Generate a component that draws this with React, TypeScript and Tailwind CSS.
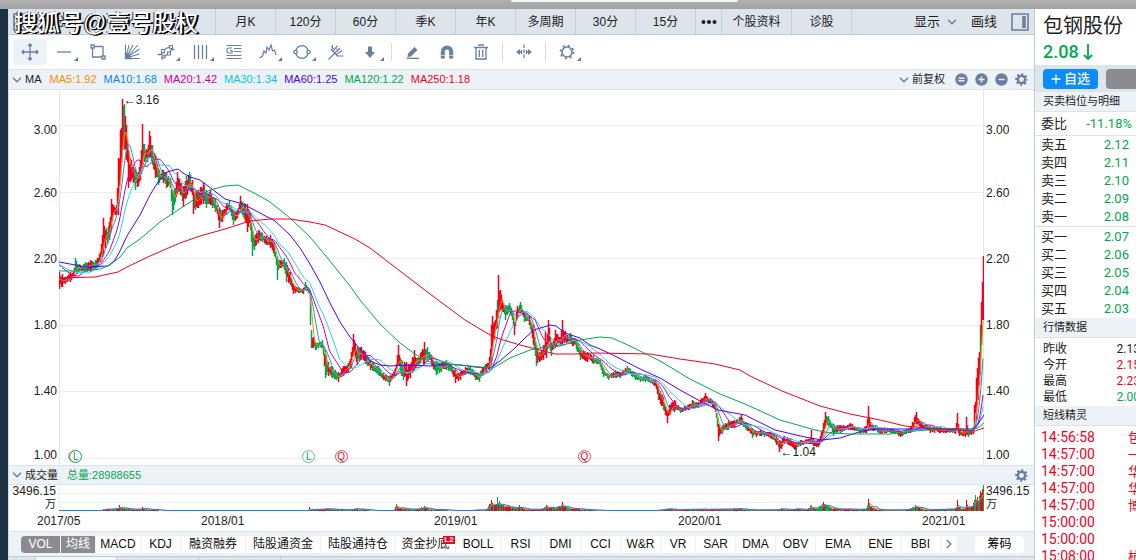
import type { ReactNode } from 'react';

type Point = [number, number];
type Range = [number, number, number];

const RED = '#f5001d';
const GREEN = '#00a94f';

// x, high, low
const ranges: Range[] = [
  [59, 272, 289], [62, 274, 287], [65, 277, 284], [70, 272, 282], [74, 268, 277], [75, 258, 272], [77, 264, 274],
  [85, 262, 272], [90, 260, 272], [95, 260, 270], [100, 252, 262], [102, 235, 257], [103, 218, 255], [105, 230, 248],
  [109, 222, 240], [111, 199, 230], [113, 205, 215], [116, 205, 215], [118, 158, 215], [120, 130, 180], [122, 99, 150],
  [124, 104, 150], [126, 125, 160], [128, 150, 188], [131, 160, 180], [135, 168, 190], [138, 172, 186], [140, 160, 180],
  [142, 124, 168], [144, 144, 162], [147, 150, 162], [149, 131, 157], [152, 145, 165], [155, 155, 178], [158, 168, 185],
  [163, 170, 183], [166, 172, 188], [170, 178, 188], [172, 190, 215], [175, 188, 202], [177, 172, 194], [181, 183, 196],
  [183, 186, 207], [186, 176, 198], [189, 172, 190], [192, 180, 195], [193, 190, 214], [198, 190, 208], [203, 182, 204],
  [206, 190, 208], [210, 190, 205], [215, 198, 212], [219, 208, 228], [222, 210, 222], [226, 203, 215], [229, 200, 210],
  [233, 210, 225], [237, 210, 218], [240, 196, 212], [245, 204, 222], [247, 204, 232], [250, 212, 230], [252, 230, 256],
  [254, 235, 250], [258, 230, 243], [262, 233, 242], [266, 236, 245], [270, 235, 248], [274, 242, 256], [277, 256, 280],
  [280, 260, 268], [284, 258, 270], [286, 262, 282], [290, 272, 285], [293, 284, 294], [298, 287, 293], [303, 288, 294],
  [305, 282, 290], [309, 290, 294], [310, 295, 325], [311, 330, 348], [315, 342, 350], [322, 340, 348], [325, 350, 378],
  [328, 362, 376], [332, 367, 378], [338, 372, 382], [343, 366, 376], [348, 363, 372], [351, 352, 368], [353, 334, 356],
  [357, 347, 365], [361, 347, 358], [365, 352, 364], [370, 360, 370], [378, 366, 375], [383, 373, 380], [389, 376, 386],
  [395, 368, 376], [398, 345, 365], [401, 360, 376], [406, 362, 386], [410, 364, 378], [414, 350, 370], [418, 357, 366],
  [424, 342, 365], [427, 347, 360], [431, 355, 365], [436, 362, 375], [441, 362, 372], [446, 360, 370], [451, 364, 372],
  [455, 370, 383], [460, 372, 380], [465, 367, 374], [470, 366, 375], [475, 372, 380], [479, 373, 382], [482, 367, 376],
  [489, 357, 370], [491, 325, 365], [492, 316, 350], [494, 322, 340], [497, 300, 328], [498, 275, 318], [500, 290, 310],
  [502, 300, 312], [505, 305, 320], [509, 303, 312], [513, 313, 326], [514, 322, 335], [517, 306, 318], [520, 302, 312],
  [524, 312, 322], [529, 316, 325], [533, 325, 345], [536, 345, 366], [539, 352, 362], [543, 345, 360], [545, 332, 355],
  [546, 342, 358], [548, 320, 345], [551, 342, 356], [555, 330, 347], [560, 337, 346], [562, 320, 345], [566, 335, 343],
  [570, 333, 344], [576, 339, 350], [580, 348, 360], [587, 352, 362], [593, 355, 364], [600, 360, 367], [603, 368, 377],
  [608, 374, 380], [615, 370, 378], [620, 372, 378], [627, 366, 373], [635, 373, 380], [640, 376, 382], [645, 375, 382],
  [655, 380, 386], [658, 386, 400], [663, 397, 410], [667, 410, 423], [669, 405, 415], [674, 400, 412], [680, 407, 413],
  [688, 405, 410], [692, 400, 409], [698, 402, 408], [705, 393, 402], [710, 398, 404], [715, 404, 412], [718, 424, 441],
  [722, 425, 434], [728, 420, 430], [734, 420, 428], [741, 415, 425], [746, 423, 430], [752, 428, 438], [760, 430, 436],
  [770, 432, 438], [776, 436, 445], [779, 440, 452], [784, 436, 444], [790, 438, 446], [795, 442, 450], [800, 440, 446],
  [810, 438, 444], [811, 430, 444], [813, 439, 446], [818, 440, 447], [821, 432, 442], [825, 412, 428], [828, 416, 426],
  [833, 424, 436], [840, 425, 433], [850, 423, 430], [860, 428, 434], [866, 426, 433], [868, 406, 430], [870, 422, 430],
  [880, 429, 434], [890, 428, 433], [900, 430, 437], [910, 427, 433], [916, 412, 424], [920, 421, 428], [930, 426, 433],
  [940, 427, 433], [955, 428, 434], [957, 413, 430], [959, 430, 436], [965, 430, 437], [966, 417, 435], [968, 430, 437],
  [973, 428, 434], [974, 405, 428], [976, 378, 420], [978, 358, 400], [980, 325, 375], [981, 302, 345], [983, 256, 320],
];

const ma60: Point[] = [
  [59, 262], [70, 264], [85, 267], [108, 266], [115, 260], [120, 251], [127, 236], [140, 215], [150, 195], [158, 182],
  [167, 172], [174, 170], [178, 169], [183, 173], [190, 177], [200, 180], [212, 189], [225, 199], [243, 204], [260, 213],
  [275, 221], [290, 235], [300, 248], [310, 264], [320, 282], [330, 303], [340, 322], [350, 337], [360, 349], [370, 361],
  [380, 365], [390, 366], [410, 365], [430, 366], [445, 364], [460, 365], [475, 367], [490, 368], [500, 361], [515, 348],
  [525, 338], [534, 330], [550, 325], [556, 326], [565, 333], [580, 338], [590, 345], [600, 349], [615, 356], [640, 369],
  [660, 378], [680, 390], [700, 401], [718, 410], [745, 415], [775, 430], [805, 437], [822, 440], [840, 438], [862, 431],
  [880, 429], [930, 429], [972, 429], [978, 424], [984, 415],
];
const ma120: Point[] = [
  [59, 271], [85, 271], [100, 269], [110, 265], [120, 257], [127, 248], [140, 239], [160, 222], [190, 202], [210, 190],
  [225, 186], [238, 185], [258, 195], [270, 202], [290, 218], [310, 237], [330, 261], [350, 286], [360, 300], [380, 324],
  [400, 343], [415, 354], [430, 362], [445, 364], [460, 365], [480, 367], [493, 368], [500, 364], [510, 358], [530, 350],
  [545, 347], [560, 346], [580, 340], [600, 337], [612, 338], [630, 346], [660, 361], [690, 379], [720, 394], [745, 404],
  [780, 420], [815, 430], [830, 433], [850, 434], [890, 434], [915, 431], [940, 429], [970, 430], [978, 428], [984, 423],
];
const ma250: Point[] = [
  [59, 278], [95, 277], [118, 272], [127, 267], [150, 256], [180, 243], [200, 236], [225, 229], [250, 221], [270, 219],
  [290, 219], [310, 222], [325, 225], [340, 232], [355, 239], [370, 248], [400, 271], [430, 294], [465, 320], [490, 335],
  [500, 339], [520, 345], [540, 350], [555, 354], [575, 354], [595, 353], [650, 354], [680, 359], [715, 364], [740, 370],
  [750, 376], [782, 391], [820, 406], [850, 414], [880, 420], [905, 426], [940, 429], [975, 431], [984, 428],
];

// x, bar height
const volumes: Point[] = [
  [59, 0], [101, 0], [103, 2], [117, 3], [119, 6], [122, 4], [130, 2], [138, 2], [142, 4], [146, 2], [158, 1], [160, 0],
  [308, 0], [309, 4], [311, 1], [326, 3], [342, 1], [348, 1], [355, 3], [368, 1], [372, 0], [393, 0], [396, 7], [400, 3],
  [415, 2], [424, 5], [428, 2], [445, 1], [452, 0], [470, 0], [476, 1], [485, 1], [491, 11], [494, 6], [497, 14],
  [501, 7], [508, 6], [515, 3], [519, 6], [524, 2], [540, 2], [546, 6], [552, 4], [556, 4], [562, 9], [566, 4], [575, 3],
  [590, 1], [605, 0], [655, 0], [668, 3], [675, 1], [690, 2], [720, 2], [738, 3], [750, 1], [775, 1], [781, 3], [790, 1],
  [796, 3], [805, 1], [811, 6], [815, 2], [823, 9], [828, 5], [835, 3], [850, 2], [866, 2], [868, 12], [871, 4], [880, 1],
  [905, 1], [915, 6], [920, 3], [928, 1], [945, 2], [955, 3], [957, 11], [960, 3], [965, 3], [966, 11], [969, 4],
  [973, 8], [975, 16], [977, 14], [980, 20], [983, 26],
];

function at(points: number[][], x: number, k: number) {
  for (let i = 1; i < points.length; i++) {
    const a = points[i - 1];
    const b = points[i];
    if (x <= b[0]) return a[k] + ((b[k] - a[k]) * (x - a[0])) / (b[0] - a[0]);
  }
  return points[points.length - 1][k];
}

function makeRandom(seed: number) {
  let s = seed;
  return () => {
    s = (s * 16807) % 2147483647;
    return s / 2147483647;
  };
}

const line = (points: number[][]) => 'M' + points.map((p) => `${p[0]} ${p[1].toFixed(1)}`).join('L');

function buildCandles() {
  const rand = makeRandom(4711);
  const closes: number[] = [];
  let up = '';
  let down = '';
  let run = 0;
  let rising = true;
  for (let x = 59; x < 984; x++) {
    const high = at(ranges, x, 1);
    const low = at(ranges, x, 2);
    const size = low - high;
    const peak = ranges.some((r) => r[0] === x);
    if (run <= 0) {
      const slope = at(ranges, x + 2, 1) - at(ranges, x - 2, 1);
      rising = rand() < (slope < -2 ? 0.85 : slope > 2 ? 0.35 : 0.58);
      run = 1 + Math.floor(rand() * 3);
    }
    run--;
    const top = peak ? high : high + size * rand() * 0.35;
    const bottom = peak ? low : low - size * rand() * 0.35;
    const bar = `M${x + 0.5} ${Math.round(top)}V${Math.round(bottom)}`;
    if (rising) up += bar;
    else down += bar;
    closes.push((high + low) / 2 + (rand() - 0.5) * size * 0.3);
  }
  return { up, down, closes };
}

function average(values: number[], days: number, before: number) {
  const out: Point[] = [];
  values.forEach((_, i) => {
    let sum = 0;
    for (let j = i - days + 1; j <= i; j++) sum += j < 0 ? before : values[j];
    out.push([59 + i, sum / days]);
  });
  return line(out);
}

function buildVolume() {
  const rand = makeRandom(99);
  const heights: number[] = [];
  let up = '';
  let down = '';
  for (let x = 59; x < 984; x++) {
    const h = at(volumes, x, 1) * (volumes.some((v) => v[0] === x) ? 1 : 0.55 + rand() * 0.4);
    heights.push(510.5 - h * 0.8);
    if (h < 0.4) continue;
    const bar = `M${x + 0.5} 511V${Math.round(511 - h)}`;
    if (rand() < 0.6) up += bar;
    else down += bar;
  }
  return { up, down, heights };
}

const candles = buildCandles();
const volume = buildVolume();

const periods = ['分时', '日K', '周K', '月K', '120分', '60分', '季K', '年K', '多周期', '30分', '15分'];

const averages = [
  { label: 'MA5:1.92', color: 'text-[#ff8c00]' },
  { label: 'MA10:1.68', color: 'text-[#0a84ff]' },
  { label: 'MA20:1.42', color: 'text-[#c800a1]' },
  { label: 'MA30:1.34', color: 'text-[#00c8e6]' },
  { label: 'MA60:1.25', color: 'text-[#4b00ff]' },
  { label: 'MA120:1.22', color: 'text-[#00a94f]' },
  { label: 'MA250:1.18', color: 'text-[#f5001d]' },
];

const indicators = [
  { label: 'VOL', width: 'w-[39px]', active: true },
  { label: '均线', width: 'w-[34px]', active: true },
  { label: 'MACD', width: 'w-[44px]' },
  { label: 'KDJ', width: 'w-[39px]' },
  { label: '融资融券', width: 'w-[64px]' },
  { label: '陆股通资金', width: 'w-[74px]' },
  { label: '陆股通持仓', width: 'w-[74px]' },
  { label: '资金抄底', width: 'w-[59px]', badge: 'L2' },
  { label: 'BOLL', width: 'w-[44px]' },
  { label: 'RSI', width: 'w-[39px]' },
  { label: 'DMI', width: 'w-[39px]' },
  { label: 'CCI', width: 'w-[39px]' },
  { label: 'W&R', width: 'w-[39px]' },
  { label: 'VR', width: 'w-[34px]' },
  { label: 'SAR', width: 'w-[39px]' },
  { label: 'DMA', width: 'w-[39px]' },
  { label: 'OBV', width: 'w-[39px]' },
  { label: 'EMA', width: 'w-[44px]' },
  { label: 'ENE', width: 'w-[39px]' },
  { label: 'BBI', width: 'w-[39px]' },
];

const asks = [['卖五', '2.12'], ['卖四', '2.11'], ['卖三', '2.10'], ['卖二', '2.09'], ['卖一', '2.08']];
const bids = [['买一', '2.07'], ['买二', '2.06'], ['买三', '2.05'], ['买四', '2.04'], ['买五', '2.03']];

const quotes = [
  { label: '昨收', value: '2.13', color: 'text-[#222]' },
  { label: '今开', value: '2.15', color: 'text-[#f5001d]' },
  { label: '最高', value: '2.23', color: 'text-[#f5001d]' },
  { label: '最低', value: '2.00', color: 'text-[#00a94f]' },
];

const alerts = [
  ['14:56:58', '包'], ['14:57:00', '一'], ['14:57:00', '华'], ['14:57:00', '华'],
  ['14:57:00', '博'], ['15:00:00', ''], ['15:00:00', ''], ['15:08:00', '杭'],
];

function Chevron({ className = '' }: { className?: string }) {
  return (
    <svg viewBox="0 0 10 6" className={`h-[6px] w-[10px] shrink-0 ${className}`} fill="none" stroke="#6b7f9e" strokeWidth="1.4">
      <path d="M1 .8l4 4 4-4" />
    </svg>
  );
}

function Gear({ className = '' }: { className?: string }) {
  return (
    <svg viewBox="0 0 14 14" className={`h-[13px] w-[13px] shrink-0 ${className}`} fill="none" stroke="#6b7f9e">
      <circle cx="7" cy="7" r="3.9" strokeWidth="2.6" />
      <circle cx="7" cy="7" r="5.8" strokeWidth="2" strokeDasharray="2.28 2.28" strokeDashoffset="1.1" />
    </svg>
  );
}

function Tool({ label, active, menu, children }: { label: string; active?: boolean; menu?: boolean; children: ReactNode }) {
  return (
    <button
      aria-label={label}
      className={`relative flex h-[26px] w-[34px] shrink-0 items-center justify-center rounded-sm ${active ? 'bg-[#edf2f6]' : ''}`}
    >
      <svg viewBox="0 0 18 18" className="h-[18px] w-[18px]" fill="none" stroke="#6b7f9e" strokeWidth="1.3">
        {children}
      </svg>
      {menu && (
        <svg viewBox="0 0 4 4" className="absolute right-[3px] bottom-[4px] h-[4px] w-[4px]" fill="#5f7394">
          <path d="M4 0v4H0z" />
        </svg>
      )}
    </button>
  );
}

function Divider() {
  return <span className="mx-[4px] h-[18px] w-px shrink-0 bg-[#d9dce0]" />;
}

function PeriodBar() {
  return (
    <nav className="flex h-[26px] items-stretch border-b border-[#bfccd6] bg-[#dde4ea] text-[12px] text-[#222]">
      <button aria-label="布局" className="flex w-[27px] shrink-0 items-center justify-center border-r border-[#c3cfd9]">
        <svg viewBox="0 0 18 18" className="h-[18px] w-[18px]" fill="none" stroke="#6b7f9e" strokeWidth="1.6">
          <path d="M1 1h16v16H1zM5 4v10" />
        </svg>
      </button>
      {periods.map((p) => (
        <button key={p} className="w-[60px] shrink-0 border-r border-[#c3cfd9]">{p}</button>
      ))}
      <button aria-label="更多" className="flex w-[26px] shrink-0 items-center justify-center border-r border-[#c3cfd9]">
        <svg viewBox="0 0 16 4" className="h-[4px] w-[16px]" fill="#1c1c1c">
          <circle cx="2.5" cy="2" r="2" />
          <circle cx="8" cy="2" r="2" />
          <circle cx="13.5" cy="2" r="2" />
        </svg>
      </button>
      <button className="w-[70px] shrink-0 border-r border-[#c3cfd9]">个股资料</button>
      <button className="w-[60px] shrink-0 border-r border-[#c3cfd9]">诊股</button>
      <div className="ml-auto flex items-center pr-[5px] text-[13px]">
        <button className="flex items-center gap-[7px]">
          显示
          <Chevron />
        </button>
        <button className="ml-[14px]">画线</button>
        <button aria-label="侧栏" className="ml-[14px]">
          <svg viewBox="0 0 18 18" className="h-[18px] w-[18px]" fill="none" stroke="#6b7f9e" strokeWidth="1.6">
            <path d="M1 1h16v16H1z" />
            <path d="M13 3v12" strokeWidth="3.6" />
          </svg>
        </button>
      </div>
    </nav>
  );
}

function Toolbar() {
  return (
    <div className="flex h-[34px] items-center pl-[4px]">
      <Tool label="十字光标" active>
        <path d="M9 1v16M1 9h16M7 3l2-2 2 2M7 15l2 2 2-2M3 7L1 9l2 2M15 7l2 2-2 2" />
      </Tool>
      <Tool label="直线" menu>
        <path d="M2 9h14" />
      </Tool>
      <Tool label="矩形">
        <path d="M5 3.5h9V13M3.5 5v9H13" />
        <path d="M2 2h3v3H2zM13 13h3v3h-3z" />
      </Tool>
      <Tool label="扇形线">
        <path d="M2.5 1.5v14h14M3 15L6 2M3 15l7-13M3 15L15 2M3 15L16.500 6M3 15l13.500-4" strokeWidth="1.1" />
        <path d="M2.5 10l5.500 5.500H2.500z" fill="#6b7f9e" />
      </Tool>
      <Tool label="平行线" menu>
        <path d="M.5 11.500h3.500l2-2M7.500 6.500L13 3.500M4.500 16.500l2-3M8 13l2.500-1.500M12.500 10l2-3.500h3" />
        <path d="M4.500 6.500h3v3h-3zM12.500 2.500h3v3h-3zM5 12h3v3H5zM10.500 9h3v3h-3z" strokeWidth="1.1" />
      </Tool>
      <Tool label="周期线" menu>
        <path d="M3.5 2v14M7.5 2v14M11.5 2v14M15.5 2v14" />
      </Tool>
      <Tool label="黄金分割">
        <path d="M1.500 2.500h15M9 5.500h7.500M9 8.500h7.500M1.500 12.500h15M1.500 15.500h15" strokeWidth="1.1" />
        <path d="M7 5H3.500Q2 5 2 6.500v2Q2 10 3.500 10H7V7.500H5" strokeWidth="1.2" />
      </Tool>
      <Tool label="波浪线" menu>
        <path d="M.5 15l3-2 1.500-5 2 2 1-6 2 3 2-5 1.500 6 2-1 1.500 5" strokeWidth="1.2" />
      </Tool>
      <Tool label="圆" menu>
        <circle cx="9" cy="9" r="6.3" />
        <circle cx="2.5" cy="9" r="1.7" fill="#fff" />
        <circle cx="15.5" cy="9" r="1.7" fill="#fff" />
      </Tool>
      <Tool label="叉线">
        <path d="M1.500 16.500l6-6M4 6.500l7 7M5 7.500L5.500 2M7.500 10.500L13 5M6.500 8l4-5.500M9.500 11.500l5.500-4M11 13h5.500" strokeWidth="1.2" />
        <path d="M4.500 3.500l3 3M8 4.500l3 3" strokeWidth="1" />
      </Tool>
      <Tool label="箭头" menu>
        <path d="M7 3.500h4V9h3L9 15 4 9h3z" fill="#6b7f9e" stroke="none" />
      </Tool>
      <Divider />
      <Tool label="画笔">
        <path d="M4 10.500L10.500 4l3 3L7 13.500l-3.500.5z" fill="#6b7f9e" stroke="none" />
        <path d="M3 15.300h12" />
      </Tool>
      <Tool label="磁铁">
        <path d="M4.800 15.500V8.700a4.200 4.200 0 018.400 0v6.800" strokeWidth="4" />
        <path d="M2.800 12.500h4M11.200 12.500h4" stroke="#c3ccd8" strokeWidth="1" />
      </Tool>
      <Tool label="删除">
        <path d="M2 4.500h14M6 2h6M4 4.500V16h10V4.500M7.300 7v7M10.700 7v7" />
      </Tool>
      <Divider />
      <Tool label="区间">
        <path d="M9 1.500v15" strokeDasharray="3.500 1.500" />
        <path d="M1 9l4-3v6zM17 9l-4-3v6z" fill="#6b7f9e" stroke="none" />
        <path d="M5 9h2M11 9h2M6.500 7v4M11.500 7v4" />
      </Tool>
      <Divider />
      <Tool label="设置" menu>
        <circle cx="9" cy="9" r="5" strokeWidth="1.5" />
        <circle cx="9" cy="9" r="6.5" strokeWidth="1.8" strokeDasharray="2 3.1" />
      </Tool>
    </div>
  );
}

function AverageBar() {
  return (
    <div className="flex h-[21px] items-center border-y border-[#dfe3e7] bg-[#edf2f6] pr-[6px] pl-[3px] text-[11px]">
      <Chevron />
      <span className="ml-[3px] text-[#222]">MA</span>
      <div className="ml-[8px] flex gap-[7px]">
        {averages.map((a) => (
          <span key={a.label} className={a.color}>{a.label}</span>
        ))}
      </div>
      <button className="ml-auto flex items-center gap-[3px] text-[#222]">
        <Chevron />
        前复权
      </button>
      <div className="ml-[10px] flex items-center gap-[7px]">
        {['M3.5 5.2h6M3.5 7.8h6', 'M3.5 6.5h6M6.5 3.5v6', 'M3.5 6.5h6'].map((d, i) => (
          <button key={d} aria-label={['重置', '放大', '缩小'][i]}>
            <svg viewBox="0 0 13 13" className="h-[13px] w-[13px]" stroke="#edf2f6" strokeWidth="1.4">
              <circle cx="6.5" cy="6.5" r="6.2" fill="#6b7f9e" stroke="none" />
              <path d={d} />
            </svg>
          </button>
        ))}
        <button aria-label="均线设置">
          <Gear />
        </button>
      </div>
    </div>
  );
}

function PriceAxis({ align }: { align: string }) {
  return (
    <div className={`flex w-[50px] shrink-0 flex-col px-[2px] text-[12px] leading-[16px] text-[#222] ${align}`}>
      <span className="pt-[32px] pb-[22px]">3.00</span>
      {['2.60', '2.20', '1.80', '1.40'].map((p) => (
        <span key={p} className="py-[25px]">{p}</span>
      ))}
      <span className="pt-[23px]">1.00</span>
    </div>
  );
}

function Marker({ letter, className }: { letter: string; className: string }) {
  return (
    <span className={`absolute bottom-[2px] flex h-[13px] w-[13px] items-center justify-center rounded-full border text-[10px] leading-none ${className}`}>
      {letter}
    </span>
  );
}

function PriceChart() {
  return (
    <div className="flex">
      <PriceAxis align="text-right" />
      <div className="relative min-w-0 flex-1">
        <svg viewBox="59 90 925 375" preserveAspectRatio="none" className="block h-[375px] w-full" fill="none">
          <g stroke="#eeeeee">
            <path d="M59 125.5H984M59 192.5H984M59 258.5H984M59 325.5H984M59 391.5H984M59 458.5H984" />
            <path d="M59.5 90V465M983.5 90V465" stroke="#e6e6e6" />
          </g>
          <path d={candles.down} stroke={GREEN} strokeWidth="1.5" />
          <path d={candles.up} stroke={RED} strokeWidth="1.5" />
          <path d={average(candles.closes, 5, 278)} stroke="#ff8c00" />
          <path d={average(candles.closes, 10, 274)} stroke="#1e90ff" />
          <path d={average(candles.closes, 20, 264)} stroke="#c800a1" />
          <path d={average(candles.closes, 30, 264)} stroke="#22d3ee" />
          <path d={line(ma60)} stroke="#4b00ff" />
          <path d={line(ma120)} stroke={GREEN} />
          <path d={line(ma250)} stroke={RED} />
        </svg>
        <span className="absolute top-[2px] left-[7%] text-[12px] leading-[16px] text-[#222]">←3.16</span>
        <span className="absolute bottom-[5px] left-[78%] text-[12px] leading-[16px] text-[#222]">←1.04</span>
        <Marker letter="L" className="left-[1.1%] border-[#00a94f] text-[#00a94f] shadow-[-1px_0_0_#f58a8a]" />
        <Marker letter="L" className="left-[26.3%] border-[#5cc48a] text-[#00a94f]" />
        <Marker letter="Q" className="left-[29.8%] border-[#f5475c] text-[#f5001d]" />
        <Marker letter="Q" className="left-[56.1%] border-[#f5475c] text-[#f5001d]" />
      </div>
      <PriceAxis align="text-left" />
    </div>
  );
}

function VolumeScale({ className }: { className: string }) {
  return (
    <div className={`flex w-[50px] shrink-0 flex-col leading-[13px] ${className}`}>
      <span>3496.15</span>
      <span className="text-[11px]">万</span>
    </div>
  );
}

function VolumeChart() {
  return (
    <section>
      <div className="flex h-[20px] items-center border-y border-[#dfe3e7] bg-[#edf2f6] pr-[6px] pl-[3px] text-[11px]">
        <Chevron />
        <span className="ml-[3px] text-[#222]">成交量</span>
        <span className="ml-[9px] text-[#00a94f]">总量:28988655</span>
        <button aria-label="成交量设置" className="ml-auto">
          <Gear />
        </button>
      </div>
      <div className="flex text-[12px] text-[#222]">
        <VolumeScale className="items-end pr-[3px]" />
        <svg viewBox="59 485 925 26" preserveAspectRatio="none" className="block h-[26px] min-w-0 flex-1" fill="none">
          <path d="M59 493.5H984M59 502.5H984M59.5 485V511" stroke="#eeeeee" />
          <path d={volume.down} stroke={GREEN} />
          <path d={volume.up} stroke={RED} />
          <path d={average(volume.heights, 5, 510.5)} stroke="#ff8c00" />
          <path d={average(volume.heights, 10, 510.5)} stroke="#0a84ff" />
        </svg>
        <VolumeScale className="pl-[2px]" />
      </div>
      <div className="flex h-[20px] items-center pl-[28px] text-[12px] text-[#222]">
        <span className="flex-[164_0_0]">2017/05</span>
        <span className="flex-[233_0_0]">2018/01</span>
        <span className="flex-[244_0_0]">2019/01</span>
        <span className="flex-[244_0_0]">2020/01</span>
        <span className="flex-[112_0_0]">2021/01</span>
      </div>
    </section>
  );
}

function IndicatorBar() {
  return (
    <div className="flex h-[25px] items-center border-t border-[#dfe3e7] bg-[#edf2f6] pr-[10px] pl-[12px] text-[12px] whitespace-nowrap">
      <div className="flex gap-px overflow-hidden rounded-l-sm rounded-r-sm">
        {indicators.map((t) => (
          <button
            key={t.label}
            className={`relative h-[17px] shrink-0 leading-[17px] ${t.width} ${t.active ? 'bg-[#8c8c90] text-white' : 'bg-white text-[#111]'}`}
          >
            {t.label}
            {t.badge && (
              <span className="absolute top-0 right-0 h-[8px] w-[12px] bg-[#f5001d] text-center text-[8px] leading-[8px] font-bold text-white">
                {t.badge}
              </span>
            )}
          </button>
        ))}
        <button aria-label="下一页" className="flex h-[17px] w-[16px] shrink-0 items-center justify-center bg-white">
          <Chevron className="-rotate-90" />
        </button>
      </div>
      <button className="ml-auto h-[17px] w-[49px] shrink-0 rounded-sm bg-white leading-[17px]">筹码</button>
    </div>
  );
}

function PanelTitle({ children }: { children: ReactNode }) {
  return (
    <h2 className="h-[20px] shrink-0 border-b border-[#dfe3e7] bg-[#edf2f6] pl-[8px] text-[11px] leading-[20px] whitespace-nowrap text-[#222]">
      {children}
    </h2>
  );
}

function Levels({ rows }: { rows: string[][] }) {
  return (
    <table className="w-full">
      <tbody>
        {rows.map(([label, price]) => (
          <tr key={label} className="h-[18px] leading-[18px]">
            <td className="pl-[6px]">{label}</td>
            <td className="pr-[7px] text-right text-[#00a94f]">{price}</td>
          </tr>
        ))}
      </tbody>
    </table>
  );
}

function QuotePanel() {
  return (
    <aside className="flex w-[102px] shrink-0 flex-col overflow-hidden border-l border-[#bfccd6] bg-white font-[Roboto,'Noto_Sans_CJK_SC',sans-serif] text-[13px] text-[#222]">
      <header className="h-[56px] shrink-0 pt-[4px] pl-[8px]">
        <h1 className="text-[20px] leading-[26px] whitespace-nowrap">包钢股份</h1>
        <p className="flex items-center gap-[4px] text-[18px] leading-[26px] font-medium text-[#00a94f]">
          2.08
          <svg viewBox="0 0 10 18" className="h-[18px] w-[10px]" fill="none" stroke={GREEN} strokeWidth="1.8">
            <path d="M5 1v15M1 12l4 4 4-4" />
          </svg>
        </p>
      </header>
      <div className="flex h-[27px] shrink-0 gap-[8px] bg-[#dde4ea] pt-[4px] pl-[8px]">
        <button className="flex h-[20px] w-[55px] shrink-0 items-center justify-center gap-[3px] rounded bg-[#0a8cff] text-[13px] font-medium text-white">
          <svg viewBox="0 0 10 10" className="h-[10px] w-[10px]" stroke="#fff" strokeWidth="1.3">
            <path d="M.5 5h9M5 .5v9" />
          </svg>
          自选
        </button>
        <button aria-label="交易" className="h-[20px] w-[55px] shrink-0 rounded bg-[#8c8c90]" />
      </div>
      <PanelTitle>买卖档位与明细</PanelTitle>
      <div className="flex h-[24px] shrink-0 items-center justify-between border-b border-[#dfe3e7] pr-[4px] pl-[6px]">
        <span>委比</span>
        <span className="text-[#00a94f]">-11.18%</span>
      </div>
      <Levels rows={asks} />
      <div className="h-[2px] shrink-0 border-t border-[#dfe3e7]" />
      <Levels rows={bids} />
      <PanelTitle>行情数据</PanelTitle>
      <dl className="pt-[3px] pb-px text-[12px] leading-[16px]">
        {quotes.map((q) => (
          <div key={q.label} className="-mr-[10px] flex justify-between pr-[6px] pl-[8px]">
            <dt>{q.label}</dt>
            <dd className={q.color}>{q.value}</dd>
          </div>
        ))}
      </dl>
      <PanelTitle>短线精灵</PanelTitle>
      <ul className="pt-[3px] leading-[17px] whitespace-nowrap text-[#f5001d]">
        {alerts.map(([time, name], i) => (
          <li key={i} className="flex pl-[6px]">
            <span className="w-[87px] shrink-0 text-[14px] leading-[17px]">{time}</span>
            <span>{name}</span>
          </li>
        ))}
      </ul>
    </aside>
  );
}

export default function App() {
  return (
    <div className="relative flex h-screen flex-col overflow-hidden bg-white font-['Liberation_Sans','Noto_Sans_CJK_SC',sans-serif]">
      <div className="h-[9px] shrink-0 bg-linear-to-b from-[#b0b0b0] to-[#a3a3a3]">
        <div className="ml-[45%] h-[2px] w-[20%] rounded-b bg-[#f4f7f9]" />
      </div>
      <div className="flex min-h-0 flex-1">
        <div className="w-[8px] shrink-0 bg-[#1c3142]" />
        <main className="flex min-w-0 flex-1 flex-col border-l border-[#d5dce2]">
          <PeriodBar />
          <Toolbar />
          <AverageBar />
          <PriceChart />
          <VolumeChart />
          <IndicatorBar />
          <div className="flex flex-1 border-t border-[#bfccd6] bg-[#dde4ea]">
            <span className="ml-[26px] w-[82px] border-x border-[#bfccd6] bg-[#f4f7f9]" />
            <span className="w-[82px] border-r border-[#bfccd6]" />
            <span className="w-[82px] border-r border-[#bfccd6]" />
          </div>
        </main>
        <QuotePanel />
      </div>
      <p className="absolute top-[8px] left-[14px] text-[23px] leading-[30px] font-medium text-white [text-shadow:1px_1px_0_#000,2px_1px_0_#000,-1px_0_0_#333]">
        搜狐号@壹号股权
      </p>
    </div>
  );
}
